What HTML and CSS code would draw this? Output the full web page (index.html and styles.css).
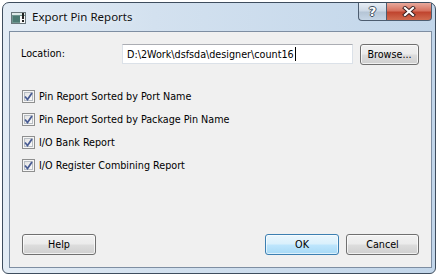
FILE: index.html
```html
<!DOCTYPE html>
<html>
<head>
<meta charset="utf-8">
<link rel="stylesheet" href="styles.css">
</head>
<body>
<div class="desktop">
  <div class="window">
    <div class="titlebar">
      <svg class="app-icon" width="15" height="12" viewBox="0 0 15 12">
        <rect x="0.5" y="0.5" width="14" height="11" fill="#6f9690" stroke="#6a777c"/>
        <rect x="1" y="1" width="13" height="2" fill="#dfeae9"/>
        <rect x="2" y="4" width="7" height="6" fill="#4d7a73"/>
        <rect x="9" y="4" width="5" height="7" fill="#f7f8f8"/>
        <rect x="11" y="1" width="2" height="6" fill="#222"/>
        <rect x="11" y="8" width="2" height="2" fill="#222"/>
      </svg>
      <span class="title">Export Pin Reports</span>
      <div class="caption-buttons">
        <div class="cap-btn cap-help"><span class="help-glyph">?</span></div>
        <div class="cap-btn cap-close">
          <svg width="14" height="11" viewBox="0 0 14 11">
            <path d="M3 2 L11 9 M11 2 L3 9" stroke="#3a2020" stroke-width="4" stroke-linecap="square"/>
            <path d="M3 2 L11 9 M11 2 L3 9" stroke="#ffffff" stroke-width="2.2" stroke-linecap="square"/>
          </svg>
        </div>
      </div>
    </div>
    <div class="client">
      <div class="location-row">
        <span class="label">Location:</span>
        <div class="input"><span>D:\2Work\dsfsda\designer\count16</span><span class="caret"></span></div>
        <div class="btn browse">Browse...</div>
      </div>
      <div class="checks">
        <div class="check-row"><span class="checkbox"><svg width="9" height="9" viewBox="0 0 9 9"><path d="M1 4.5 L3.5 7.5 L8 1" fill="none" stroke="#4a5d94" stroke-width="1.8"/></svg></span><span>Pin Report Sorted by Port Name</span></div>
        <div class="check-row"><span class="checkbox"><svg width="9" height="9" viewBox="0 0 9 9"><path d="M1 4.5 L3.5 7.5 L8 1" fill="none" stroke="#4a5d94" stroke-width="1.8"/></svg></span><span>Pin Report Sorted by Package Pin Name</span></div>
        <div class="check-row"><span class="checkbox"><svg width="9" height="9" viewBox="0 0 9 9"><path d="M1 4.5 L3.5 7.5 L8 1" fill="none" stroke="#4a5d94" stroke-width="1.8"/></svg></span><span>I/O Bank Report</span></div>
        <div class="check-row"><span class="checkbox"><svg width="9" height="9" viewBox="0 0 9 9"><path d="M1 4.5 L3.5 7.5 L8 1" fill="none" stroke="#4a5d94" stroke-width="1.8"/></svg></span><span>I/O Register Combining Report</span></div>
      </div>
      <div class="spacer"></div>
      <div class="button-row">
        <div class="btn help">Help</div>
        <div class="grow"></div>
        <div class="btn ok">OK</div>
        <div class="btn cancel">Cancel</div>
      </div>
    </div>
  </div>
</div>
</body>
</html>
```
FILE: styles.css
```css
html, body {
  margin: 0;
  padding: 0;
  background: #ffffff;
}
.desktop {
  width: 439px;
  height: 275px;
  padding: 2px 0 0 2px;
  box-sizing: border-box;
}
.window {
  width: 434px;
  height: 272px;
  box-sizing: border-box;
  border: 1px solid #3e4d5e;
  border-radius: 7px 7px 6px 6px;
  background: linear-gradient(to right, #e3ecf5 0%, #d3e1ef 35%, #c2d6ea 100%);
  display: flex;
  flex-direction: column;
  padding-bottom: 5px;
}
.titlebar {
  height: 28px;
  display: flex;
  align-items: center;
  flex: none;
}
.app-icon {
  margin-left: 8px;
  margin-top: 1px;
  flex: none;
}
.title {
  margin-left: 6px;
  font-family: "Noto Sans", sans-serif;
  font-size: 11.5px;
  line-height: 28px;
  color: #111;
  text-shadow: 0 0 6px rgba(255,255,255,0.9);
}
.caption-buttons {
  margin-left: auto;
  margin-right: 3px;
  align-self: flex-start;
  display: flex;
  height: 19px;
}
.cap-btn {
  height: 18px;
  box-sizing: border-box;
  border: 1px solid #4d5d70;
  border-top: none;
  display: flex;
  align-items: center;
  justify-content: center;
}
.cap-help {
  width: 28px;
  border-right: none;
  border-radius: 0 0 0 4px;
  background: linear-gradient(to bottom, #e6edf5 0%, #cdd9e6 45%, #b5c5d6 55%, #c6d6e6 100%);
}
.help-glyph {
  font-family: "DejaVu Sans", sans-serif;
  font-weight: bold;
  font-size: 13px;
  color: #fff;
  text-shadow: 1px 0 0 #3f4d5c, -1px 0 0 #3f4d5c, 0 1px 0 #3f4d5c, 0 -1px 0 #3f4d5c;
  line-height: 16px;
}
.cap-close {
  width: 46px;
  border-radius: 0 0 4px 0;
  background: linear-gradient(to bottom, #e8a99c 0%, #d7725f 45%, #c0452f 55%, #d16b4f 100%);
}
.client {
  margin: 0 3px 0 6px;
  flex: 1;
  border: 1px solid #7e8ea2;
  background: #f0f0f0;
  display: flex;
  flex-direction: column;
  padding: 12px 12px 12px 11px;
  font-family: "DejaVu Sans Condensed", "DejaVu Sans", sans-serif;
  font-size: 10.7px;
  color: #000;
}
.location-row {
  display: flex;
  align-items: flex-start;
  height: 21px;
}
.label {
  width: 101px;
  line-height: 20px;
}
.input {
  width: 231px;
  height: 20px;
  box-sizing: border-box;
  background: #fff;
  border: 1px solid #dbe1e8;
  border-top-color: #abadb3;
  padding-left: 4px;
  display: flex;
  align-items: center;
  white-space: nowrap;
}
.caret {
  width: 1px;
  height: 14px;
  background: #000;
  margin-left: 1px;
}
.btn {
  height: 21px;
  box-sizing: border-box;
  border: 1px solid #707070;
  border-radius: 3px;
  background: linear-gradient(to bottom, #f2f2f2 0%, #ebebeb 48%, #dddddd 52%, #cfcfcf 100%);
  box-shadow: inset 0 0 0 1px rgba(255,255,255,0.7);
  display: flex;
  align-items: center;
  justify-content: center;
}
.browse {
  width: 59px;
  margin-left: 7px;
}
.checks {
  margin-top: 20px;
  display: flex;
  flex-direction: column;
}
.check-row {
  height: 23px;
  display: flex;
  align-items: center;
}
.checkbox {
  width: 13px;
  height: 13px;
  box-sizing: border-box;
  border: 1px solid #8e8f8f;
  background: linear-gradient(135deg, #dcdcdc 0%, #f4f4f4 60%, #ffffff 100%);
  box-shadow: inset 0 0 0 1px #f6f6f6, inset 0 0 0 2px #b8bec4;
  margin-left: 1px;
  margin-right: 4px;
  display: flex;
  align-items: center;
  justify-content: center;
}
.spacer {
  flex: 1;
}
.button-row {
  display: flex;
  height: 21px;
}
.grow {
  flex: 1;
}
.help {
  width: 74px;
  margin-left: 1px;
}
.ok {
  width: 74px;
  border-color: #3c7fb1;
  background: linear-gradient(to bottom, #eaf6fd 0%, #d9f0fc 48%, #bee6fd 52%, #a7d9f5 100%);
  box-shadow: inset 0 0 0 1px rgba(255,255,255,0.6);
}
.cancel {
  width: 73px;
  margin-left: 7px;
}
```
